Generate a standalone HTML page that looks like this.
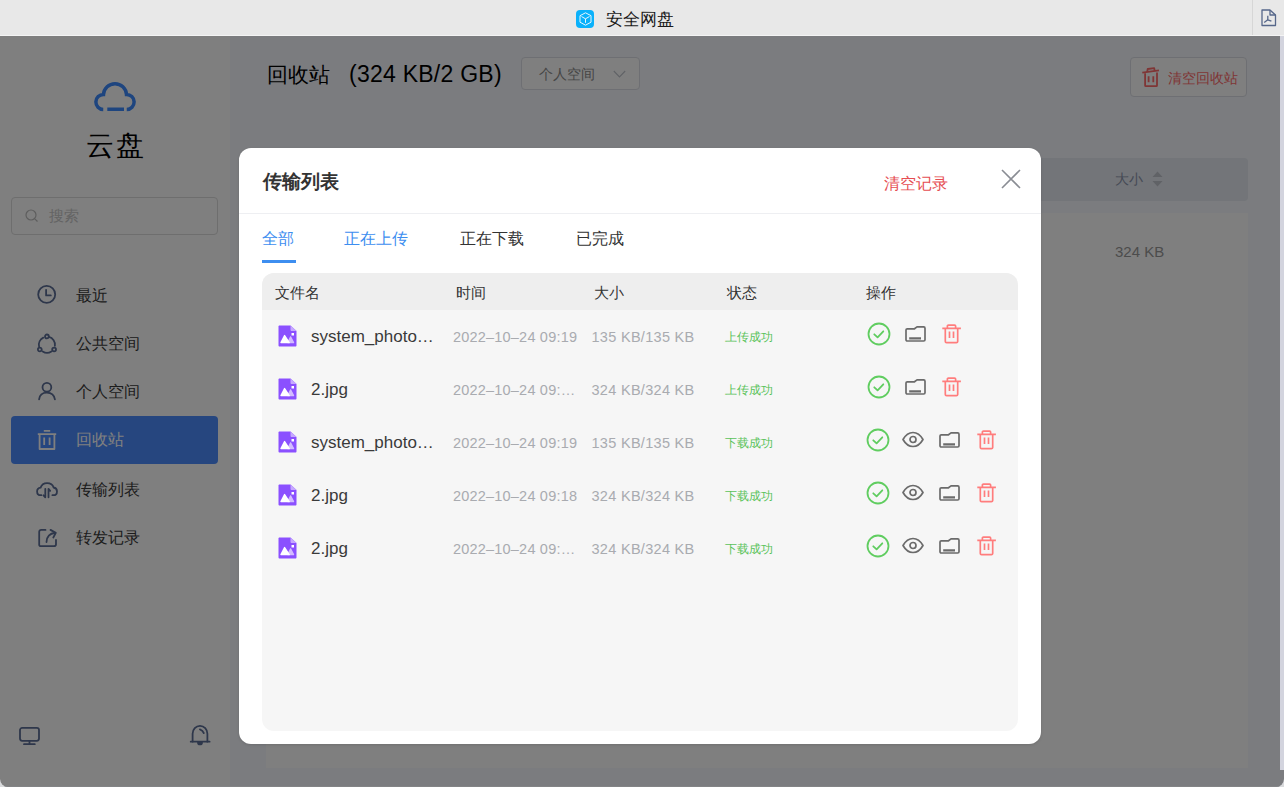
<!DOCTYPE html>
<html><head><meta charset="utf-8">
<style>
*{margin:0;padding:0;box-sizing:border-box}
html,body{width:1284px;height:787px;overflow:hidden;background:#d9dadc;font-family:"Liberation Sans",sans-serif}
.abs{position:absolute;white-space:nowrap}
svg{position:absolute;overflow:visible}
#win{position:absolute;left:0;top:0;width:1284px;height:787px;border-radius:0 0 8px 8px;overflow:hidden;background:#f6f8fe}
#tb{position:absolute;left:0;top:0;width:1284px;height:36px;background:#e8e8e8;border-bottom:1px solid #f4f4f4}
#tb .sep{position:absolute;left:1252px;top:0;width:1px;height:35px;background:#d6d6d6}
#side{position:absolute;left:0;top:36px;width:230px;height:751px;background:#fff}
#main{position:absolute;left:230px;top:36px;width:1054px;height:751px;background:#f6f8fe}
#ovl{position:absolute;left:0;top:36px;width:1284px;height:751px;background:rgba(0,0,0,.5)}
#strip{position:absolute;left:1280px;top:36px;width:4px;height:734px;background:#d3d4de}
.nav{position:absolute;left:11px;width:207px;height:48px;border-radius:4px}
.nav .t{position:absolute;left:65px;top:1px;line-height:48px;font-size:16px;color:#3a3a3a}
.ic{fill:none;stroke:#5c6e96;stroke-width:1.8;stroke-linecap:round;stroke-linejoin:round}
#modal{position:absolute;left:239px;top:148px;width:802px;height:596px;background:#fff;border-radius:12px;box-shadow:0 1px 3px rgba(0,0,0,.12)}
.tab{position:absolute;top:79px;font-size:16px;line-height:24px}
.th{position:absolute;top:9.5px;font-size:14.5px;line-height:20px;color:#333}
.row{position:absolute;left:0;width:756px;height:53px}
.row .fic{position:absolute;left:16px;top:15px}
.row .fn{position:absolute;left:49px;top:16px;font-size:17px;line-height:22px;color:#3a3a3a}
.row .tm{position:absolute;left:191px;top:17px;font-size:14.5px;line-height:20px;letter-spacing:0.2px;color:#a9abb0}
.row .sz{position:absolute;left:329.5px;top:17px;font-size:14.5px;line-height:20px;letter-spacing:0.3px;color:#a9abb0}
.row .st{position:absolute;left:463px;top:18px;font-size:12px;line-height:18px;color:#5ac35a}
</style></head><body>
<div id="win">
  <div id="tb">
    <div class="abs" style="left:576px;top:9.5px;width:18px;height:18px;border-radius:4px;background:#0ab1fb"></div>
    <svg style="left:576px;top:9.5px" width="18" height="18" viewBox="0 0 18 18"><g fill="none" stroke="#e8f7ff" stroke-width="1" stroke-linejoin="round"><path d="M9.5 2.8 L15 5.7 V12.2 L9.5 15.2 L4 12.2 V5.7 Z"/><path d="M5.5 6.5 L9.5 8.8 L13.5 6.5 M9.5 8.8 V12.8"/></g></svg>
    <div class="abs" style="left:606px;top:9px;font-size:17px;line-height:22px;color:#1a1a1a">安全网盘</div>
    <div class="sep"></div>
    <svg style="left:1261px;top:9px" width="16" height="18" viewBox="0 0 16 18"><g fill="none" stroke="#56678a" stroke-width="1.3" stroke-linejoin="round"><path d="M1 1 H9 L14.5 6 V16.5 H1 Z"/><path d="M9 1 V6 H14.5"/><path d="M6.8 6.8 V10.8 M6.8 10.8 L3.2 13.6 M6.8 10.8 L10.4 12.2"/></g></svg>
  </div>
  <div id="side">
    <svg style="left:94px;top:46px" width="42" height="29" viewBox="0 0 42 29"><g fill="none" stroke="#3c8aff" stroke-width="3.5"><path d="M9.25 27.5 A7.5 7.5 0 1 1 9.52 12.5 A11.5 11.5 0 0 1 32.48 12.5 A7.5 7.5 0 1 1 32.75 27.5"/><path d="M13.3 27.25 H30"/></g></svg>
    <div class="abs" style="left:86px;top:92px;font-size:28px;line-height:36px;letter-spacing:1.5px;color:#000">云盘</div>
    <div class="abs" style="left:11px;top:160.5px;width:207px;height:38px;border:1px solid #dcdcdc;border-radius:4px"></div>
    <svg style="left:25px;top:173px" width="14" height="14" viewBox="0 0 14 14"><g fill="none" stroke="#bcbcbc" stroke-width="1.2"><circle cx="6" cy="6" r="5"/><path d="M9.8 9.8 L12.5 12.5"/></g></svg>
    <div class="abs" style="left:49px;top:170px;font-size:15px;line-height:20px;color:#c8c8c8">搜索</div>
    <div class="nav" style="top:235px"><span class="t">最近</span>
      <svg style="left:26px;top:14px" width="20" height="20" viewBox="0 0 20 20"><g class="ic"><circle cx="9.7" cy="9.4" r="8.5"/><path d="M9.1 4.8 V10.4 H13.8"/></g></svg></div>
    <div class="nav" style="top:283px"><span class="t">公共空间</span>
      <svg style="left:26px;top:14px" width="20" height="20" viewBox="0 0 20 20"><g class="ic"><circle cx="9.9" cy="3.4" r="1.9"/><circle cx="2.8" cy="16.5" r="1.9"/><circle cx="17.1" cy="16.5" r="1.9"/><path d="M6.3 4.6 A8 8 0 0 0 2.1 13.6"/><path d="M11.9 3.9 A8 8 0 0 1 17.9 12.8"/><path d="M5.7 18.5 A8 8 0 0 0 14.4 18.4"/></g></svg></div>
    <div class="nav" style="top:331px"><span class="t">个人空间</span>
      <svg style="left:26px;top:15px" width="20" height="20" viewBox="0 0 20 20"><g class="ic"><circle cx="9.9" cy="5.2" r="4.4"/><path d="M2.1 17.4 C2.6 12.8 6 10.6 9.9 10.6 C13.8 10.6 17.2 12.8 17.9 17.4"/></g></svg></div>
    <div class="nav" style="top:380px;background:#4c8cfe"><span class="t" style="color:#fff;top:0">回收站</span>
      <svg style="left:26px;top:14px" width="20" height="20" viewBox="0 0 20 20"><g class="ic" style="stroke:#fff;stroke-linecap:butt"><path d="M0.8 4.1 H19.2 M6.8 0.9 H13.2 M2.6 4.1 V19 H17.4 V4.1 M7.2 7.5 V15 M12.6 7.5 V15"/></g></svg></div>
    <div class="nav" style="top:429px"><span class="t">传输列表</span>
      <svg style="left:25px;top:14px" width="22" height="20" viewBox="0 0 22 20"><g class="ic"><path d="M5.4 16.2 H4.8 C2.6 16.2 1.1 14.5 1.1 12.4 C1.1 10.4 2.5 8.9 4.6 8.6 C5.6 5.5 8 4.1 11.1 4.1 C14.2 4.1 16.7 5.5 17.6 8.5 C19.6 8.8 21 10.4 21 12.4 C21 14.5 19.5 16.2 17.3 16.2 H16.4"/><path d="M9.3 9.8 V18.3 L7.5 16.3 M12.5 18.3 V9.8 L14.2 11.8"/></g></svg></div>
    <div class="nav" style="top:477px"><span class="t">转发记录</span>
      <svg style="left:26px;top:14px" width="20" height="20" viewBox="0 0 20 20"><g class="ic"><path d="M8.5 2.9 H4.2 C3 2.9 2.2 3.7 2.2 4.9 V17.7 C2.2 18.9 3 19.2 4.2 19.2 H17 C18.2 19.2 19 18.5 19 17.3 V13"/><path d="M9.5 15 C9.5 10 13 6.2 17.6 6"/><path d="M13.5 2.9 L18.8 5.9 L16.3 10.5"/></g></svg></div>
    <svg style="left:18px;top:690px" width="22" height="20" viewBox="0 0 22 20"><g class="ic"><rect x="2" y="1.9" width="19" height="12.9" rx="2.2"/><path d="M11.5 15 V18.2 M6 18.2 H16.8"/></g></svg>
    <svg style="left:189px;top:688px" width="22" height="22" viewBox="0 0 22 22"><g class="ic"><path d="M3.6 17.7 V9.8 C3.6 5.3 6.9 1.8 11 1.8 C15.1 1.8 18.4 5.3 18.4 9.8 V17.7"/><path d="M1.7 17.7 H20.6"/><path d="M10.9 5.4 C12.6 6 14.2 7.4 14.8 9.1"/><path d="M9 18.4 A2 2 0 0 0 13 18.4 Z" style="fill:#5c6e96"/></g></svg>
  </div>
  <div id="main">
    <div class="abs" style="left:36.5px;top:21.5px;font-size:21px;line-height:34px;color:#000">回收站</div><div class="abs" style="left:119px;top:21px;font-size:23px;line-height:34px;letter-spacing:0.25px;color:#000">(324 KB/2 GB)</div>
    <div class="abs" style="left:290.5px;top:21px;width:119.5px;height:33px;border:1px solid #dcdfe6;border-radius:4px;background:#fff"></div>
    <div class="abs" style="left:309px;top:29px;font-size:14px;line-height:18px;color:#8c8c8c">个人空间</div>
    <svg style="left:383px;top:33.5px" width="13" height="9" viewBox="0 0 13 9"><path d="M0.8 1 L6.5 7 L12.2 1" fill="none" stroke="#c0c4cc" stroke-width="1.1"/></svg>
    <div class="abs" style="left:900px;top:21px;width:117px;height:40px;border:1px solid #dcdfe6;border-radius:4px;background:#fff"></div>
    <svg style="left:912px;top:31px" width="18" height="21" viewBox="0 0 18 21"><g fill="none" stroke="#ff6b6b" stroke-width="1.8" stroke-linejoin="round"><path d="M0.3 5.7 L17 3.4"/><path d="M5.2 5 L5.7 2 L12.2 1.2 L12.8 4.1"/><path d="M3.1 6.2 V18.5 C3.1 18.9 3.4 19.2 3.8 19.2 H14.3 C14.7 19.2 15 18.9 15 18.5 V5.6"/><path d="M6.6 9.2 V15.3 M11.3 9.2 V15.3"/></g></svg>
    <div class="abs" style="left:938px;top:32px;font-size:14px;line-height:20px;color:#ff6b6b">清空回收站</div>
    <div class="abs" style="left:36px;top:122px;width:982px;height:43px;background:#e6eaf2;border-radius:4px"></div>
    <div class="abs" style="left:885px;top:133px;font-size:14px;line-height:20px;color:#8a94aa">大小</div>
    <svg style="left:922px;top:135px" width="11" height="16" viewBox="0 0 11 16"><path d="M5.5 0.5 L10.5 6 H0.5 Z M5.5 15.5 L10.5 10 H0.5 Z" fill="#c0c4cc"/></svg>
    <div class="abs" style="left:36px;top:177px;width:982px;height:555px;background:#fff"></div>
    <div class="abs" style="left:885px;top:206px;font-size:15px;line-height:20px;color:#999">324 KB</div>
  </div>
  <div id="ovl"></div>
  <div id="strip"></div><div class="abs" style="left:0;top:786px;width:1284px;height:1px;background:#838486"></div>
  <div id="modal">
    <div class="abs" style="left:24px;top:21.5px;font-size:19px;line-height:24px;font-weight:bold;color:#333">传输列表</div>
    <div class="abs" style="left:644.5px;top:23.5px;font-size:16.3px;line-height:22px;color:#e64d52">清空记录</div>
    <svg style="left:762px;top:21px" width="20" height="20" viewBox="0 0 20 20"><path d="M1 1 L19 19 M19 1 L1 19" stroke="#8a8d94" stroke-width="1.6" fill="none"/></svg>
    <div class="abs" style="left:0;top:65px;width:802px;height:1px;background:#eeeff2"></div>
    <div class="tab" style="left:23px;color:#3d8ef0">全部</div>
    <div class="tab" style="left:105px;color:#3d8ef0">正在上传</div>
    <div class="tab" style="left:221px;color:#333">正在下载</div>
    <div class="tab" style="left:337px;color:#333">已完成</div>
    <div class="abs" style="left:23px;top:112px;width:34px;height:3px;background:#3d8ef0"></div>
    <div class="abs" style="left:23px;top:125px;width:756px;height:458px;border-radius:12px;background:#f6f6f6;overflow:hidden">
      <div class="abs" style="left:0;top:0;width:756px;height:37px;background:#eeeeee"></div>
      <div class="th" style="left:13px">文件名</div>
      <div class="th" style="left:194px">时间</div>
      <div class="th" style="left:332px">大小</div>
      <div class="th" style="left:465px">状态</div>
      <div class="th" style="left:604px">操作</div>
      <!--ROWS--><div class="row" style="top:37px"><svg class="fic" width="19" height="22" viewBox="0 0 19 22"><path d="M1.5 0.5 H12.5 L18.5 6 V20.5 C18.5 21 18 21.5 17.5 21.5 H1.5 C1 21.5 0.5 21 0.5 20.5 V1.5 C0.5 1 1 0.5 1.5 0.5 Z" fill="#8b50ff"/><path d="M12.5 0.5 L18.5 6 H13.5 C13 6 12.5 5.5 12.5 5 Z" fill="#c6a8ff"/><rect x="13.5" y="8" width="2.5" height="2.5" fill="#fff"/><path d="M9.8 17.6 L12.6 11.8 L15.6 17.6 Z" fill="#d3bcff" stroke="#d3bcff" stroke-width="1.2" stroke-linejoin="round"/><path d="M3 17.6 L6.6 10.6 L11.2 17.6 Z" fill="#fff" stroke="#fff" stroke-width="1.4" stroke-linejoin="round"/></svg><div class="fn">system_photo…</div><div class="tm">2022–10–24 09:19</div><div class="sz">135 KB/135 KB</div><div class="st">上传成功</div><svg style="left:605px;top:12px" width="24" height="24" viewBox="0 0 24 24"><g fill="none" stroke="#60cd60" stroke-width="1.8" stroke-linecap="round" stroke-linejoin="round"><circle cx="12" cy="12" r="10.5"/><path d="M7.3 12.3 L10.6 15.4 L16.3 9.3"/></g></svg><svg style="left:643px;top:16px" width="21" height="17" viewBox="0 0 21 17"><g fill="none" stroke="#6b6b6b" stroke-width="1.7" stroke-linejoin="round"><path d="M1 4 C1 3.2 1.5 2.8 2.3 2.8 H9.5 L12 0.9 H18.7 C19.5 0.9 20 1.4 20 2.2 V13.8 C20 14.5 19.5 15 18.7 15 H2.3 C1.5 15 1 14.5 1 13.8 Z"/></g><path d="M4.2 12.4 H16" stroke="#6b6b6b" stroke-width="2.2"/></svg><svg style="left:680px;top:13px" width="20" height="21" viewBox="0 0 20 21"><g fill="none" stroke="#ff7d7d" stroke-width="1.7" stroke-linejoin="round"><path d="M0.3 5.3 H18.9"/><path d="M5.4 5.3 V3 C5.4 2.5 5.8 2.1 6.4 2.1 H12.6 C13.2 2.1 13.6 2.5 13.6 3 V5.3"/><path d="M3.3 5.3 V18.4 C3.3 19.2 3.8 19.7 4.6 19.7 H14.4 C15.2 19.7 15.7 19.2 15.7 18.4 V5.3"/><path d="M7.5 8.6 V15 M11.5 8.6 V15"/></g></svg></div>
<div class="row" style="top:90px"><svg class="fic" width="19" height="22" viewBox="0 0 19 22"><path d="M1.5 0.5 H12.5 L18.5 6 V20.5 C18.5 21 18 21.5 17.5 21.5 H1.5 C1 21.5 0.5 21 0.5 20.5 V1.5 C0.5 1 1 0.5 1.5 0.5 Z" fill="#8b50ff"/><path d="M12.5 0.5 L18.5 6 H13.5 C13 6 12.5 5.5 12.5 5 Z" fill="#c6a8ff"/><rect x="13.5" y="8" width="2.5" height="2.5" fill="#fff"/><path d="M9.8 17.6 L12.6 11.8 L15.6 17.6 Z" fill="#d3bcff" stroke="#d3bcff" stroke-width="1.2" stroke-linejoin="round"/><path d="M3 17.6 L6.6 10.6 L11.2 17.6 Z" fill="#fff" stroke="#fff" stroke-width="1.4" stroke-linejoin="round"/></svg><div class="fn">2.jpg</div><div class="tm">2022–10–24 09:…</div><div class="sz">324 KB/324 KB</div><div class="st">上传成功</div><svg style="left:605px;top:12px" width="24" height="24" viewBox="0 0 24 24"><g fill="none" stroke="#60cd60" stroke-width="1.8" stroke-linecap="round" stroke-linejoin="round"><circle cx="12" cy="12" r="10.5"/><path d="M7.3 12.3 L10.6 15.4 L16.3 9.3"/></g></svg><svg style="left:643px;top:16px" width="21" height="17" viewBox="0 0 21 17"><g fill="none" stroke="#6b6b6b" stroke-width="1.7" stroke-linejoin="round"><path d="M1 4 C1 3.2 1.5 2.8 2.3 2.8 H9.5 L12 0.9 H18.7 C19.5 0.9 20 1.4 20 2.2 V13.8 C20 14.5 19.5 15 18.7 15 H2.3 C1.5 15 1 14.5 1 13.8 Z"/></g><path d="M4.2 12.4 H16" stroke="#6b6b6b" stroke-width="2.2"/></svg><svg style="left:680px;top:13px" width="20" height="21" viewBox="0 0 20 21"><g fill="none" stroke="#ff7d7d" stroke-width="1.7" stroke-linejoin="round"><path d="M0.3 5.3 H18.9"/><path d="M5.4 5.3 V3 C5.4 2.5 5.8 2.1 6.4 2.1 H12.6 C13.2 2.1 13.6 2.5 13.6 3 V5.3"/><path d="M3.3 5.3 V18.4 C3.3 19.2 3.8 19.7 4.6 19.7 H14.4 C15.2 19.7 15.7 19.2 15.7 18.4 V5.3"/><path d="M7.5 8.6 V15 M11.5 8.6 V15"/></g></svg></div>
<div class="row" style="top:143px"><svg class="fic" width="19" height="22" viewBox="0 0 19 22"><path d="M1.5 0.5 H12.5 L18.5 6 V20.5 C18.5 21 18 21.5 17.5 21.5 H1.5 C1 21.5 0.5 21 0.5 20.5 V1.5 C0.5 1 1 0.5 1.5 0.5 Z" fill="#8b50ff"/><path d="M12.5 0.5 L18.5 6 H13.5 C13 6 12.5 5.5 12.5 5 Z" fill="#c6a8ff"/><rect x="13.5" y="8" width="2.5" height="2.5" fill="#fff"/><path d="M9.8 17.6 L12.6 11.8 L15.6 17.6 Z" fill="#d3bcff" stroke="#d3bcff" stroke-width="1.2" stroke-linejoin="round"/><path d="M3 17.6 L6.6 10.6 L11.2 17.6 Z" fill="#fff" stroke="#fff" stroke-width="1.4" stroke-linejoin="round"/></svg><div class="fn">system_photo…</div><div class="tm">2022–10–24 09:19</div><div class="sz">135 KB/135 KB</div><div class="st">下载成功</div><svg style="left:604px;top:12px" width="24" height="24" viewBox="0 0 24 24"><g fill="none" stroke="#60cd60" stroke-width="1.8" stroke-linecap="round" stroke-linejoin="round"><circle cx="12" cy="12" r="10.5"/><path d="M7.3 12.3 L10.6 15.4 L16.3 9.3"/></g></svg><svg style="left:640px;top:15px" width="22" height="17" viewBox="0 0 22 17"><g fill="none" stroke="#6b6b6b" stroke-width="1.7" stroke-linejoin="round"><path d="M1 8.5 C3.8 3.6 7.2 1.5 11 1.5 C14.8 1.5 18.2 3.6 21 8.5 C18.2 13.4 14.8 15.5 11 15.5 C7.2 15.5 3.8 13.4 1 8.5 Z"/><circle cx="11" cy="8.5" r="3"/></g></svg><svg style="left:677px;top:16px" width="21" height="17" viewBox="0 0 21 17"><g fill="none" stroke="#6b6b6b" stroke-width="1.7" stroke-linejoin="round"><path d="M1 4 C1 3.2 1.5 2.8 2.3 2.8 H9.5 L12 0.9 H18.7 C19.5 0.9 20 1.4 20 2.2 V13.8 C20 14.5 19.5 15 18.7 15 H2.3 C1.5 15 1 14.5 1 13.8 Z"/></g><path d="M4.2 12.4 H16" stroke="#6b6b6b" stroke-width="2.2"/></svg><svg style="left:715px;top:13px" width="20" height="21" viewBox="0 0 20 21"><g fill="none" stroke="#ff7d7d" stroke-width="1.7" stroke-linejoin="round"><path d="M0.3 5.3 H18.9"/><path d="M5.4 5.3 V3 C5.4 2.5 5.8 2.1 6.4 2.1 H12.6 C13.2 2.1 13.6 2.5 13.6 3 V5.3"/><path d="M3.3 5.3 V18.4 C3.3 19.2 3.8 19.7 4.6 19.7 H14.4 C15.2 19.7 15.7 19.2 15.7 18.4 V5.3"/><path d="M7.5 8.6 V15 M11.5 8.6 V15"/></g></svg></div>
<div class="row" style="top:196px"><svg class="fic" width="19" height="22" viewBox="0 0 19 22"><path d="M1.5 0.5 H12.5 L18.5 6 V20.5 C18.5 21 18 21.5 17.5 21.5 H1.5 C1 21.5 0.5 21 0.5 20.5 V1.5 C0.5 1 1 0.5 1.5 0.5 Z" fill="#8b50ff"/><path d="M12.5 0.5 L18.5 6 H13.5 C13 6 12.5 5.5 12.5 5 Z" fill="#c6a8ff"/><rect x="13.5" y="8" width="2.5" height="2.5" fill="#fff"/><path d="M9.8 17.6 L12.6 11.8 L15.6 17.6 Z" fill="#d3bcff" stroke="#d3bcff" stroke-width="1.2" stroke-linejoin="round"/><path d="M3 17.6 L6.6 10.6 L11.2 17.6 Z" fill="#fff" stroke="#fff" stroke-width="1.4" stroke-linejoin="round"/></svg><div class="fn">2.jpg</div><div class="tm">2022–10–24 09:18</div><div class="sz">324 KB/324 KB</div><div class="st">下载成功</div><svg style="left:604px;top:12px" width="24" height="24" viewBox="0 0 24 24"><g fill="none" stroke="#60cd60" stroke-width="1.8" stroke-linecap="round" stroke-linejoin="round"><circle cx="12" cy="12" r="10.5"/><path d="M7.3 12.3 L10.6 15.4 L16.3 9.3"/></g></svg><svg style="left:640px;top:15px" width="22" height="17" viewBox="0 0 22 17"><g fill="none" stroke="#6b6b6b" stroke-width="1.7" stroke-linejoin="round"><path d="M1 8.5 C3.8 3.6 7.2 1.5 11 1.5 C14.8 1.5 18.2 3.6 21 8.5 C18.2 13.4 14.8 15.5 11 15.5 C7.2 15.5 3.8 13.4 1 8.5 Z"/><circle cx="11" cy="8.5" r="3"/></g></svg><svg style="left:677px;top:16px" width="21" height="17" viewBox="0 0 21 17"><g fill="none" stroke="#6b6b6b" stroke-width="1.7" stroke-linejoin="round"><path d="M1 4 C1 3.2 1.5 2.8 2.3 2.8 H9.5 L12 0.9 H18.7 C19.5 0.9 20 1.4 20 2.2 V13.8 C20 14.5 19.5 15 18.7 15 H2.3 C1.5 15 1 14.5 1 13.8 Z"/></g><path d="M4.2 12.4 H16" stroke="#6b6b6b" stroke-width="2.2"/></svg><svg style="left:715px;top:13px" width="20" height="21" viewBox="0 0 20 21"><g fill="none" stroke="#ff7d7d" stroke-width="1.7" stroke-linejoin="round"><path d="M0.3 5.3 H18.9"/><path d="M5.4 5.3 V3 C5.4 2.5 5.8 2.1 6.4 2.1 H12.6 C13.2 2.1 13.6 2.5 13.6 3 V5.3"/><path d="M3.3 5.3 V18.4 C3.3 19.2 3.8 19.7 4.6 19.7 H14.4 C15.2 19.7 15.7 19.2 15.7 18.4 V5.3"/><path d="M7.5 8.6 V15 M11.5 8.6 V15"/></g></svg></div>
<div class="row" style="top:249px"><svg class="fic" width="19" height="22" viewBox="0 0 19 22"><path d="M1.5 0.5 H12.5 L18.5 6 V20.5 C18.5 21 18 21.5 17.5 21.5 H1.5 C1 21.5 0.5 21 0.5 20.5 V1.5 C0.5 1 1 0.5 1.5 0.5 Z" fill="#8b50ff"/><path d="M12.5 0.5 L18.5 6 H13.5 C13 6 12.5 5.5 12.5 5 Z" fill="#c6a8ff"/><rect x="13.5" y="8" width="2.5" height="2.5" fill="#fff"/><path d="M9.8 17.6 L12.6 11.8 L15.6 17.6 Z" fill="#d3bcff" stroke="#d3bcff" stroke-width="1.2" stroke-linejoin="round"/><path d="M3 17.6 L6.6 10.6 L11.2 17.6 Z" fill="#fff" stroke="#fff" stroke-width="1.4" stroke-linejoin="round"/></svg><div class="fn">2.jpg</div><div class="tm">2022–10–24 09:…</div><div class="sz">324 KB/324 KB</div><div class="st">下载成功</div><svg style="left:604px;top:12px" width="24" height="24" viewBox="0 0 24 24"><g fill="none" stroke="#60cd60" stroke-width="1.8" stroke-linecap="round" stroke-linejoin="round"><circle cx="12" cy="12" r="10.5"/><path d="M7.3 12.3 L10.6 15.4 L16.3 9.3"/></g></svg><svg style="left:640px;top:15px" width="22" height="17" viewBox="0 0 22 17"><g fill="none" stroke="#6b6b6b" stroke-width="1.7" stroke-linejoin="round"><path d="M1 8.5 C3.8 3.6 7.2 1.5 11 1.5 C14.8 1.5 18.2 3.6 21 8.5 C18.2 13.4 14.8 15.5 11 15.5 C7.2 15.5 3.8 13.4 1 8.5 Z"/><circle cx="11" cy="8.5" r="3"/></g></svg><svg style="left:677px;top:16px" width="21" height="17" viewBox="0 0 21 17"><g fill="none" stroke="#6b6b6b" stroke-width="1.7" stroke-linejoin="round"><path d="M1 4 C1 3.2 1.5 2.8 2.3 2.8 H9.5 L12 0.9 H18.7 C19.5 0.9 20 1.4 20 2.2 V13.8 C20 14.5 19.5 15 18.7 15 H2.3 C1.5 15 1 14.5 1 13.8 Z"/></g><path d="M4.2 12.4 H16" stroke="#6b6b6b" stroke-width="2.2"/></svg><svg style="left:715px;top:13px" width="20" height="21" viewBox="0 0 20 21"><g fill="none" stroke="#ff7d7d" stroke-width="1.7" stroke-linejoin="round"><path d="M0.3 5.3 H18.9"/><path d="M5.4 5.3 V3 C5.4 2.5 5.8 2.1 6.4 2.1 H12.6 C13.2 2.1 13.6 2.5 13.6 3 V5.3"/><path d="M3.3 5.3 V18.4 C3.3 19.2 3.8 19.7 4.6 19.7 H14.4 C15.2 19.7 15.7 19.2 15.7 18.4 V5.3"/><path d="M7.5 8.6 V15 M11.5 8.6 V15"/></g></svg></div><!--/ROWS-->
    </div>
  </div>
</div>
</body></html>
